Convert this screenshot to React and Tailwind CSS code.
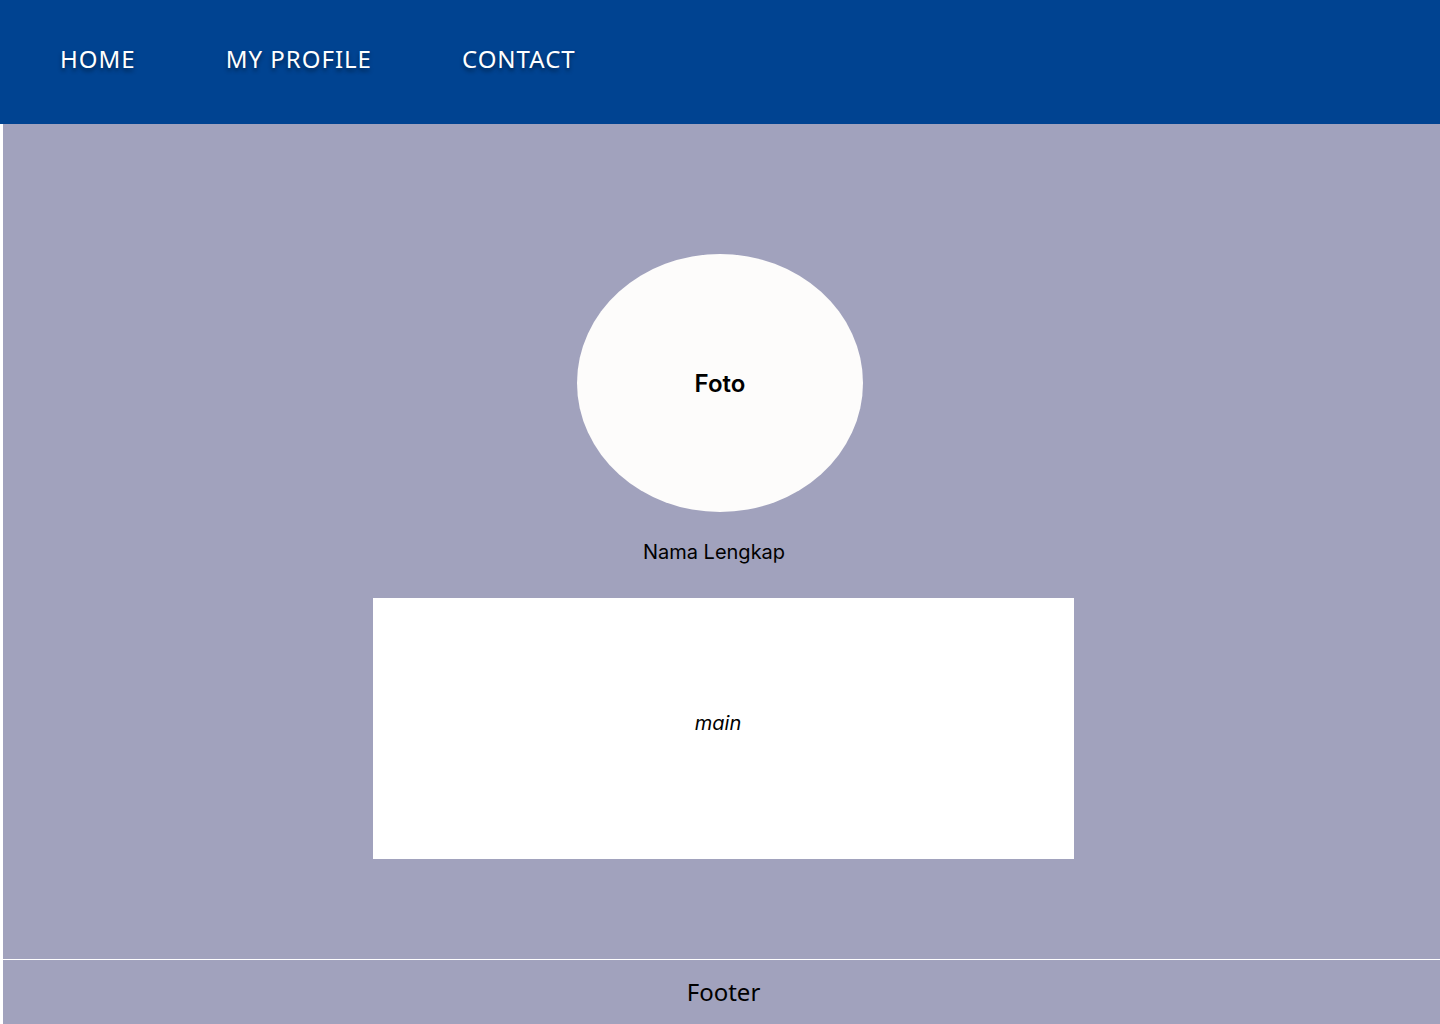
import React from "react";

const navItems = ["HOME", "MY PROFILE", "CONTACT"];

const App = () => {
  return (
    <div className="min-h-[1024px] bg-white font-['Inter',sans-serif] text-black">
      <header className="h-[124px] bg-[#004391] flex items-center pl-[60px] pb-[7px] gap-[90px]">
        {navItems.map((item) => (
          <a
            key={item}
            href="#"
            className="text-white text-[24px] font-['Noto_Sans',sans-serif] tracking-[1px] [text-shadow:0_3px_4px_rgba(0,0,0,0.45)]"
          >
            {item}
          </a>
        ))}
      </header>

      <div className="ml-[3px] bg-[#a1a2bd]">
        <section className="h-[836px] border-b border-white flex flex-col items-center pt-[130px]">
          <div className="w-[286px] h-[258px] rounded-[50%] bg-[#fdfcfb] flex items-center justify-center -ml-[3px]">
            <span className="text-[24px] font-semibold mt-[2px]">Foto</span>
          </div>
          <p className="mt-[28px] text-[20px] leading-[24px] -ml-[15px]">Nama Lengkap</p>
          <div className="mt-[34px] w-[701px] h-[261px] bg-white flex items-center justify-center ml-[4px]">
            <span className="italic text-[20px] -ml-[11px] -mt-[12px]">main</span>
          </div>
        </section>
        <footer className="h-[64px] flex items-center justify-center pl-[4px]">
          <span className="text-[24px] font-['Noto_Sans',sans-serif]">Footer</span>
        </footer>
      </div>
    </div>
  );
};

export default App;
